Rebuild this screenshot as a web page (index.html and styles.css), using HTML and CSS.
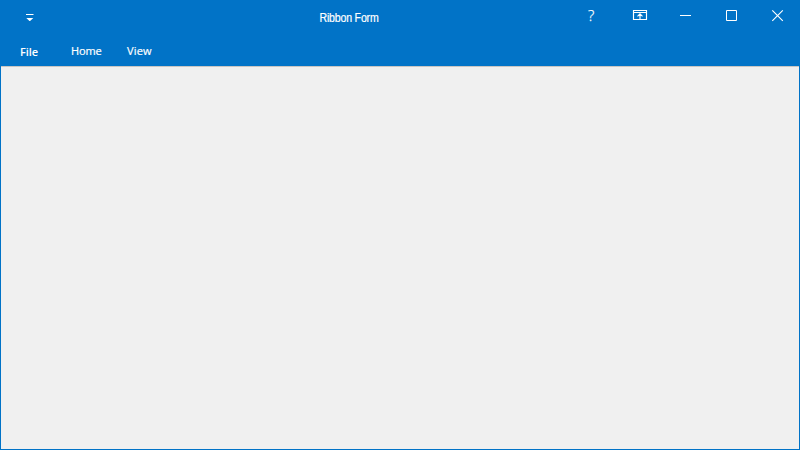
FILE: index.html
```html
<!DOCTYPE html>
<html lang="en">
<head>
<meta charset="utf-8">
<title>Ribbon Form</title>
<link rel="stylesheet" href="styles.css">
</head>
<body>
<div class="window">
  <header class="titlebar">
    <div class="quick-access">
      <svg width="8" height="7" viewBox="0 0 8 7"><path d="M0 0h7.5v1H0zM.3 4h7L3.75 7.3z"/></svg>
    </div>
    <h1 class="title">Ribbon Form</h1>
    <div class="controls">
      <span class="control help">?</span>
      <svg class="control restore" viewBox="0 0 46 30"><path d="M17.5 10.5h13v9h-13zM17.5 12.5h13M24 19v-5M21.5 16.4L24 13.9l2.5 2.5"/></svg>
      <svg class="control" viewBox="0 0 46 30"><path d="M18 15.5h11"/></svg>
      <svg class="control" viewBox="0 0 46 30"><path d="M18.5 10.5h10v10h-10z"/></svg>
      <svg class="control close" viewBox="0 0 46 30"><path d="M18.3 10.3l10.5 10.5M28.8 10.3L18.3 20.8"/></svg>
    </div>
  </header>
  <nav class="tabs">
    <span class="tab file">File</span>
    <span class="tab home">Home</span>
    <span class="tab view">View</span>
  </nav>
  <main class="content"></main>
</div>
</body>
</html>
```
FILE: styles.css
```css
* { box-sizing: border-box; }
body { margin: 0; }
.window {
  width: 800px;
  height: 450px;
  display: flex;
  flex-direction: column;
  background: #0173c7;
  color: #fff;
  font-family: "Open Sans", "Noto Sans", sans-serif;
  font-size: 11px;
}
.titlebar {
  height: 36px;
  display: grid;
  grid-template-columns: 128px 442px 230px;
}
.quick-access { padding: 14px 0 0 26px; }
.quick-access svg { display: block; fill: #fff; }
.title {
  margin: 0;
  text-align: center;
  font: 12px/36px "Liberation Sans", sans-serif;
  letter-spacing: -0.2px;
  transform: scaleX(0.88);
  -webkit-text-stroke: 0.2px #fff;
}
.controls { display: flex; height: 30px; }
.control {
  width: 46px;
  height: 30px;
  fill: none;
  stroke: #fff;
  stroke-width: 1;
}
.restore { stroke-width: 1.15; }
.close { stroke-width: 1.15; }
.help {
  padding-left: 18px;
  font-size: 15px;
  font-weight: 300;
  line-height: 31px;
  -webkit-text-stroke: 0.25px #fff;
}
.tabs {
  height: 30px;
  display: flex;
  line-height: 30px;
}
.file { width: 51px; margin-left: 20px; padding-top: 1px; font-weight: 600; letter-spacing: -0.1px; }
.home, .view { -webkit-text-stroke: 0.2px #fff; }
.home { width: 56px; letter-spacing: -0.1px; }
.view { letter-spacing: 0.2px; }
.content {
  flex: 1;
  margin: 0 1px 1px;
  border-top: 1px solid #c8c6c4;
  background: #f0f0f0;
}
```
